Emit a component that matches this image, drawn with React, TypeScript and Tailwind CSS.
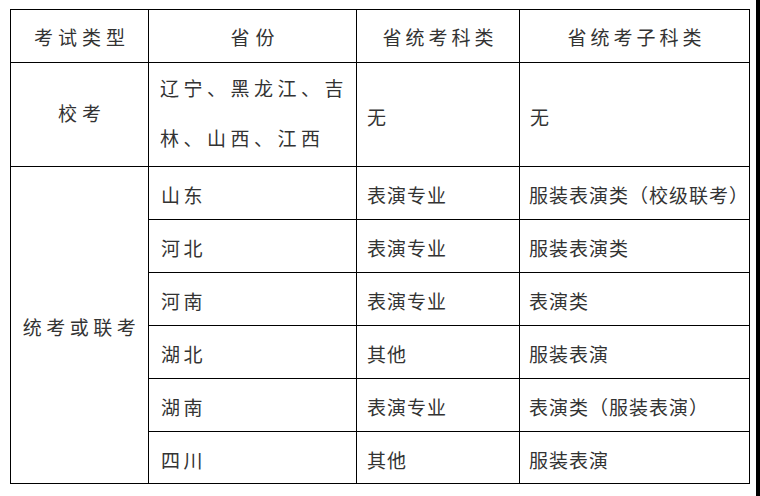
import React from "react";

const font = { fontFamily: '"Noto Sans CJK SC", "Noto Sans", sans-serif' };

type Row = { p: string; a: string; b: string };
const rows: Row[] = [
  { p: "山东", a: "表演专业", b: "服装表演类（校级联考）" },
  { p: "河北", a: "表演专业", b: "服装表演类" },
  { p: "河南", a: "表演专业", b: "表演类" },
  { p: "湖北", a: "其他", b: "服装表演" },
  { p: "湖南", a: "表演专业", b: "表演类（服装表演）" },
  { p: "四川", a: "其他", b: "服装表演" },
];

export default function App() {
  return (
    <div
      className="flex w-[760px] h-[496px] bg-white text-[#333] text-[19px] leading-none"
      style={font}
    >
      <div className="flex-1 pl-[10px] pt-[9px]">
        <div className="grid grid-cols-[137px_207px_162px_229px] grid-rows-[52px_103px_52px_52px_52px_52px_52px_51px] gap-px bg-black p-px w-max">
          {/* header */}
          <div className="bg-white flex items-center justify-center tracking-[5px] pl-[5px]">考试类型</div>
          <div className="bg-white flex items-center justify-center tracking-[6px] pl-[6px]">省份</div>
          <div className="bg-white flex items-center justify-center tracking-[4px] pl-[4px]">省统考科类</div>
          <div className="bg-white flex items-center justify-center tracking-[4px] pl-[4px]">省统考子科类</div>

          {/* 校考 row */}
          <div className="bg-white flex items-center justify-center tracking-[5px] pl-[5px] pb-[4px]">校考</div>
          <div className="bg-white flex flex-col justify-center pl-[11px] tracking-[4.5px] leading-[50px] pb-[4px]">
            <span>辽宁、黑龙江、吉</span>
            <span>林、山西、江西</span>
          </div>
          <div className="bg-white flex items-center pl-[10px] pt-[4px]">无</div>
          <div className="bg-white flex items-center pl-[10px] pt-[4px]">无</div>

          {/* merged col1 */}
          <div className="bg-white row-span-6 col-start-1 row-start-3 flex items-center justify-center tracking-[4.5px] pl-[4px] pt-[3px]">
            统考或联考
          </div>

          {rows.map((r, i) => (
            <React.Fragment key={i}>
              <div className="bg-white col-start-2 flex items-center pl-[12px] tracking-[3.5px] pt-[3px]">{r.p}</div>
              <div className="bg-white col-start-3 flex items-center pl-[10px] tracking-[1px] pt-[3px]">{r.a}</div>
              <div className="bg-white col-start-4 flex items-center pl-[9px] tracking-[1px] pt-[3px] whitespace-nowrap">{r.b}</div>
            </React.Fragment>
          ))}
        </div>
      </div>
      <div className="w-[4px] bg-black" />
    </div>
  );
}
